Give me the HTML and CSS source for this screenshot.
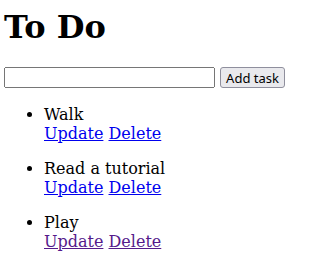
FILE: index.html
```html
<!DOCTYPE html>
<html>
<head>
<meta charset="utf-8">
<link rel="stylesheet" href="styles.css">
</head>
<body class="page">
<h1 class="title">To Do</h1>
<form class="task-form">
<input type="text" class="task-input"> <button type="button" class="task-button">Add task</button>
</form>
<ul class="task-list">
<li class="task"><p class="task-body">Walk<br><a href="#u1">Update</a> <a href="#d1">Delete</a></p></li>
<li class="task"><p class="task-body">Read a tutorial<br><a href="#u2">Update</a> <a href="#d2">Delete</a></p></li>
<li class="task"><p class="task-body">Play<br><a class="visited" href="#u3">Update</a> <a class="visited" href="#d3">Delete</a></p></li>
</ul>
</body>
</html>
```
FILE: styles.css
```css
.page {
  margin: 0 4px;
  font-family: "DejaVu Serif", serif;
  font-size: 16px;
}
.title {
  margin: 8px 0 21px;
  font-size: 32px;
}
.task-input, .task-button {
  font-family: "Noto Sans", "DejaVu Sans", sans-serif;
  font-size: 13px;
  box-sizing: border-box;
  height: 21px;
  vertical-align: top;
}
.task-input {
  width: 211px;
}
.task-button {
  padding: 0 5px;
  white-space: nowrap;
  border: 1px solid #8f8f9d;
  border-radius: 3px;
  background: #e9e9ed;
  color: #000;
}
.task-list {
  margin-top: 17px;
}
.visited { color: #551a8b; }
```
